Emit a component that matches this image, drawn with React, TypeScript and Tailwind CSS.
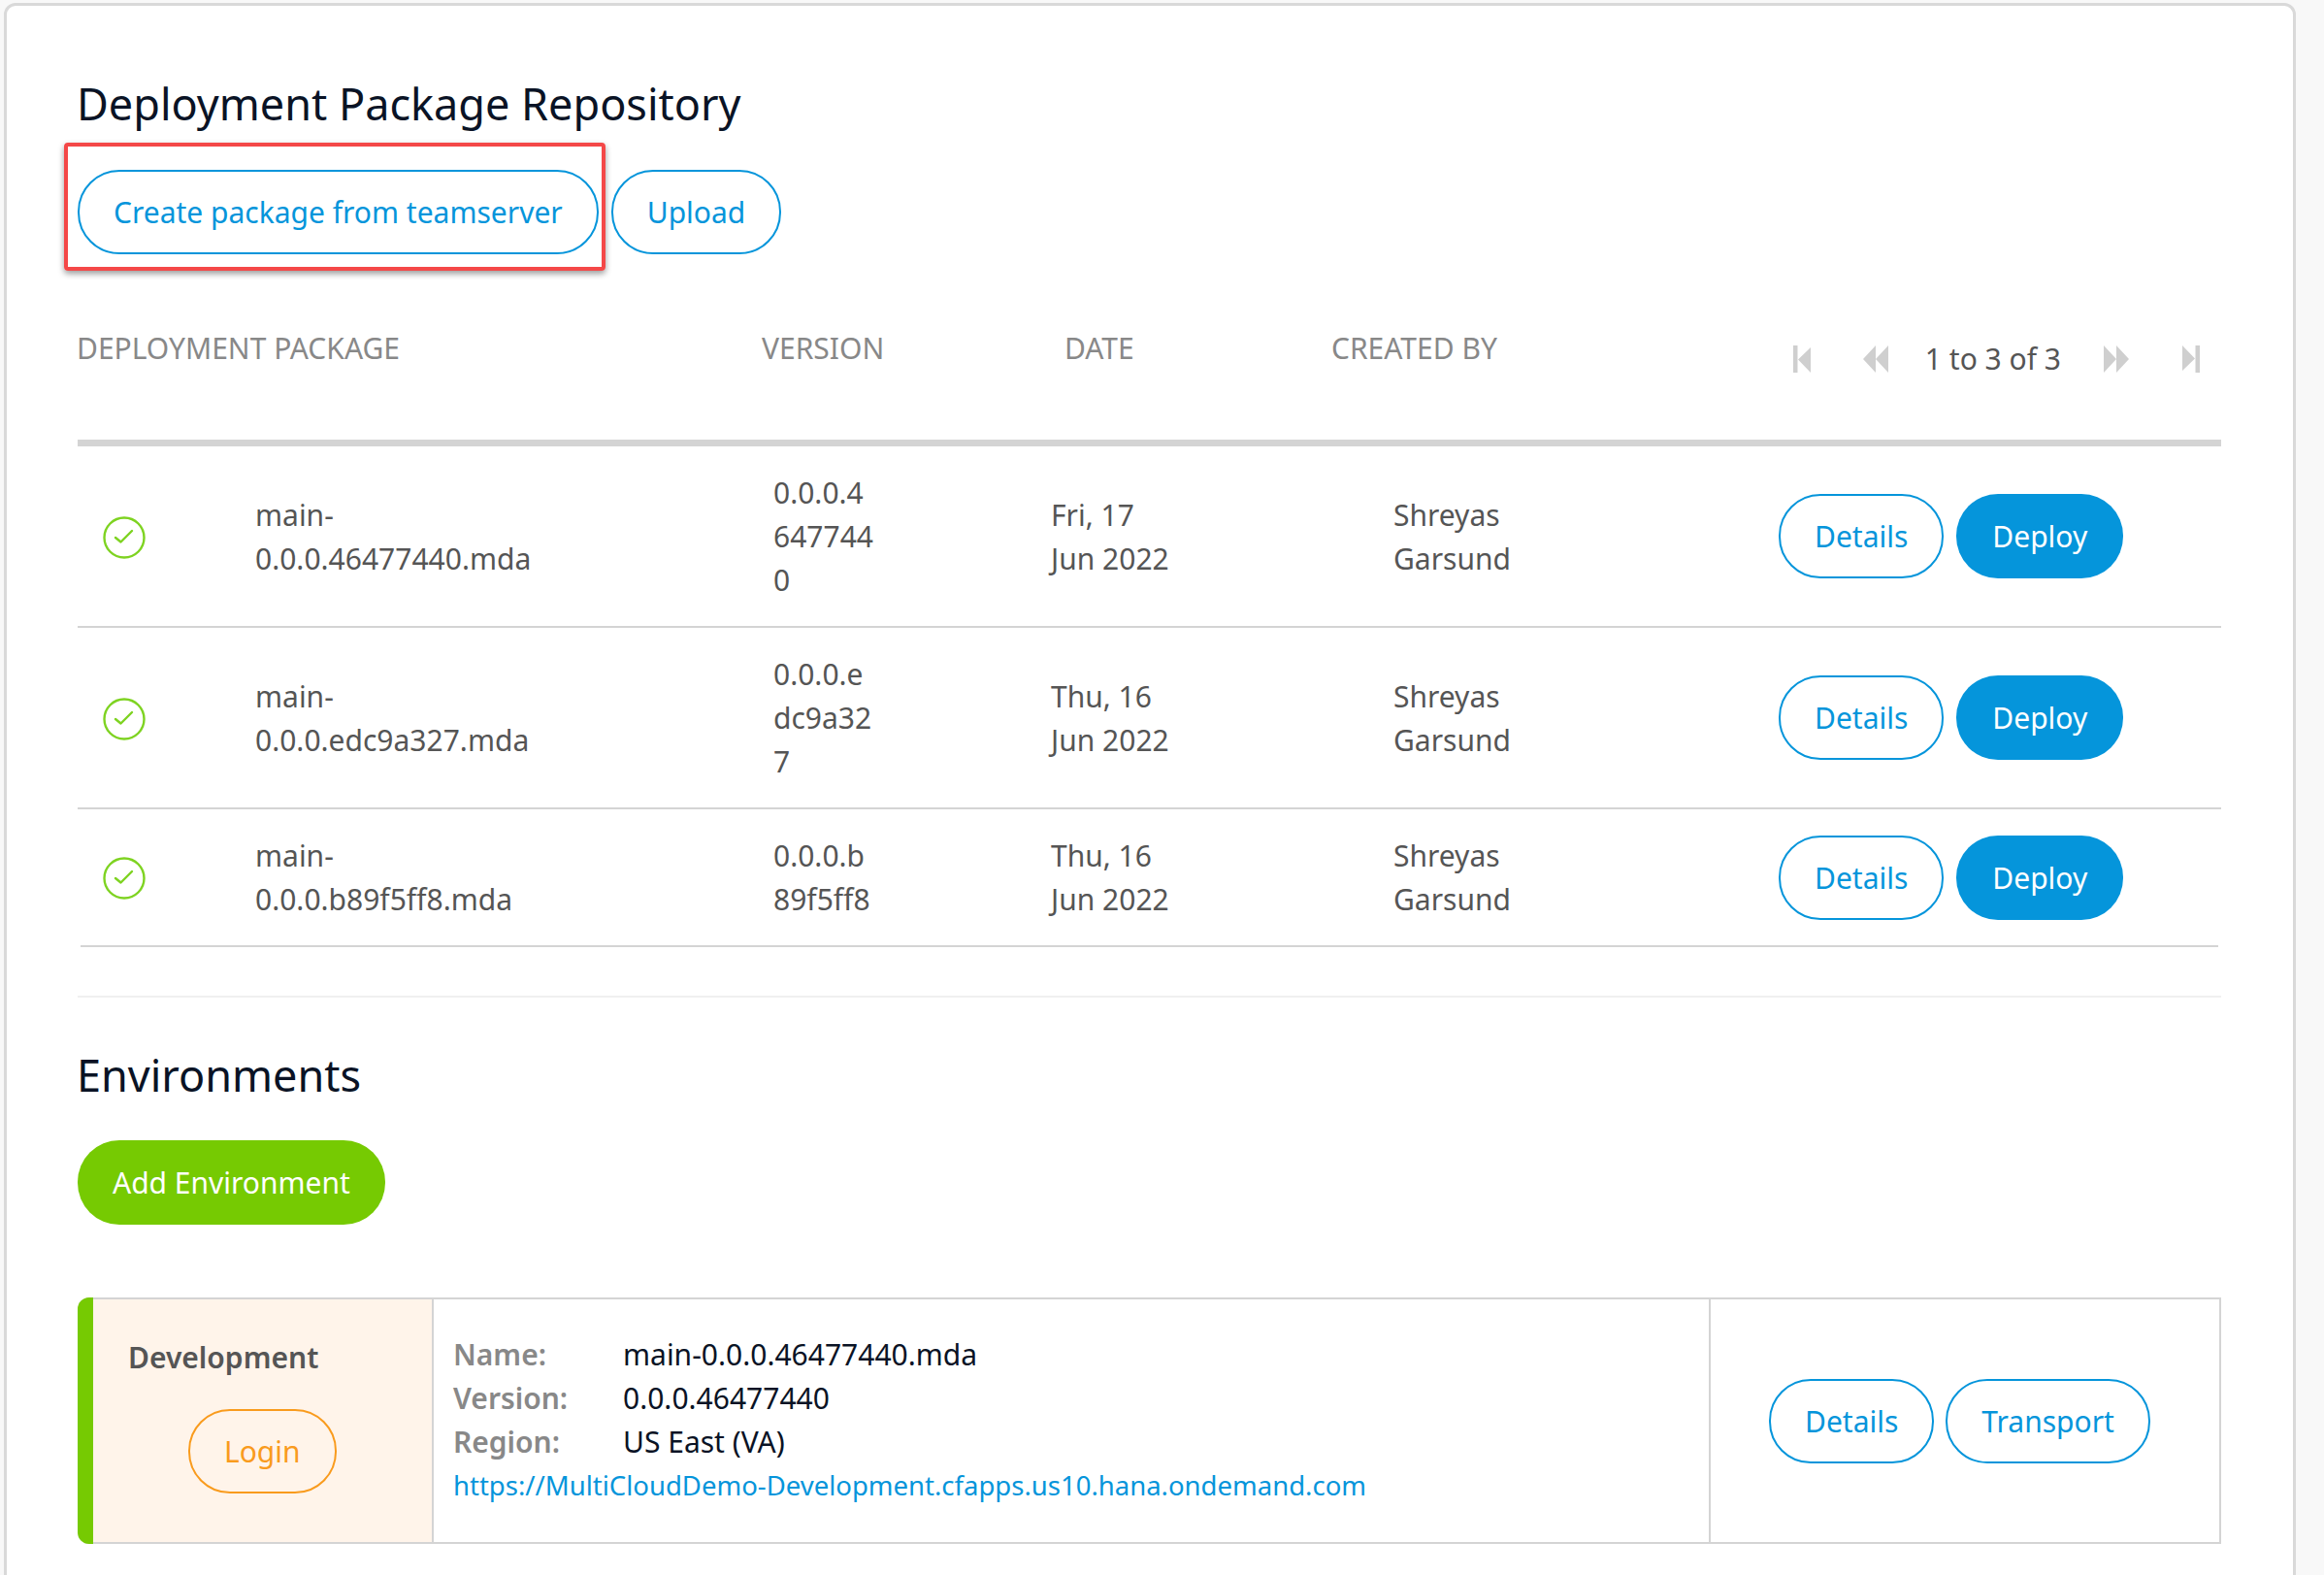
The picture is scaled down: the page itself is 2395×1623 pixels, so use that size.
const font = { fontFamily: '"Noto Sans", sans-serif' };

const rows = [
  { name: 'main-0.0.0.46477440.mda', version: '0.0.0.46477440', date: 'Fri, 17 Jun 2022' },
  { name: 'main-0.0.0.edc9a327.mda', version: '0.0.0.edc9a327', date: 'Thu, 16 Jun 2022' },
  { name: 'main-0.0.0.b89f5ff8.mda', version: '0.0.0.b89f5ff8', date: 'Thu, 16 Jun 2022' },
];

function OutlineButton({ children, className = '' }: { children: React.ReactNode; className?: string }) {
  return (
    <button className={`h-[87px] rounded-[43px] border-2 border-[#0595db] px-[35px] text-[#0595db] ${className}`}>
      {children}
    </button>
  );
}

function CheckIcon() {
  return (
    <svg width="44" height="44" viewBox="0 0 44 44" fill="none" className="shrink-0">
      <circle cx="22" cy="22" r="20.5" stroke="#7ed321" strokeWidth="2.400" />
      <path d="M13 22l5.5 4.500L30 15" stroke="#7ed321" strokeWidth="2.400" strokeLinecap="round" strokeLinejoin="round" />
    </svg>
  );
}

function PagerIcon({ kind }: { kind: 'first' | 'prev' | 'next' | 'last' }) {
  const flip = kind === 'next' || kind === 'last';
  const double = kind === 'prev' || kind === 'next';
  return (
    <svg width={double ? 26 : 18} height="28" viewBox={double ? '0 0 26 28' : '0 0 18 28'} fill="#cfcfcf" className={flip ? 'rotate-180' : ''}>
      {double ? (
        <path d="M13 0v28L0 14zM26 0v28L13 14z" />
      ) : (
        <path d="M0 0h4.500v28H0zM18 2v26L5 14.500z" />
      )}
    </svg>
  );
}

export default function App() {
  return (
    <div className="h-[1623px] overflow-hidden bg-[#f8f8f8] pl-[4px] pt-[3px] text-[30px] leading-[45px] text-[#555]" style={font}>
      <div className="relative h-[1700px] w-[2362px] rounded-t-[12px] border-[3px] border-[#d9d9d9] bg-white pl-[73px] pr-[74px] pt-[78px]">
        <h1 className="-ml-px text-[45px] leading-[45px] text-[#0a1325]">Deployment Package Repository</h1>

        <div className="mt-[46px] flex gap-[13px]">
          <OutlineButton>Create package from teamserver</OutlineButton>
          <OutlineButton>Upload</OutlineButton>
        </div>
        {/* annotation box drawn over the screenshot */}
        <div className="absolute left-[59px] top-[141px] h-[132px] w-[558px] rounded-[4px] border-[4px] border-[#f44848] shadow-[0_3px_6px_rgba(0,0,0,0.4)]" />

        <div className="flex h-[198px] items-start border-b-[7px] border-[#d4d4d4]">
          <div className="-ml-px flex pt-[74px] text-[#888]">
            <div className="w-[706px]">DEPLOYMENT PACKAGE</div>
            <div className="w-[312px]">VERSION</div>
            <div className="w-[275px]">DATE</div>
            <div>CREATED BY</div>
          </div>
          <div className="ml-auto flex items-center pr-[22px] pt-[85px]">
            <PagerIcon kind="first" />
            <div className="ml-[54px]"><PagerIcon kind="prev" /></div>
            <span className="ml-[38px] mr-[44px]">1 to 3 of 3</span>
            <PagerIcon kind="next" />
            <div className="ml-[55px]"><PagerIcon kind="last" /></div>
          </div>
        </div>

        {rows.map((row, i) => (
          <div key={row.name} className={`flex items-center py-[25px] ${i < 2 ? 'border-b-2 border-[#d4d4d4]' : ''}`}>
            <div className="mt-[2px] w-[183px] pl-[26px]"><CheckIcon /></div>
            <div className="w-[534px]"><div className="w-[310px]">{row.name}</div></div>
            <div className="w-[286px]"><div className="w-[105px] break-all">{row.version}</div></div>
            <div className="w-[353px]"><div className="w-[130px]">{row.date}</div></div>
            <div className="w-[397px]"><div className="w-[130px]">Shreyas Garsund</div></div>
            <div className="flex gap-[13px]">
              <OutlineButton>Details</OutlineButton>
              <button className="h-[87px] rounded-[43px] bg-[#0595db] px-[37px] text-white">Deploy</button>
            </div>
          </div>
        ))}
        <div className="mx-[3px] h-[2px] bg-[#d4d4d4]" />

        <div className="mt-[50px] h-[2px] bg-[#f0f0f0]" />

        <h2 className="-ml-px mt-[57px] text-[45px] leading-[45px] text-[#0a1325]">Environments</h2>
        <button className="mt-[45px] h-[87px] rounded-[43px] bg-[#76ca02] px-[36px] text-white">Add Environment</button>

        <div className="mt-[75px] flex h-[254px] rounded-l-[12px] border-y-2 border-r-2 border-[#d4d4d4]">
          <div className="-my-[2px] w-[16px] shrink-0 rounded-l-[12px] bg-[#76ca02]" />
          <div className="w-[349px] shrink-0 bg-[#fff4ea] pl-[36px] pt-[37px]">
            <div className="font-semibold">Development</div>
            <button className="ml-[62px] mt-[31px] h-[87px] rounded-[43px] border-2 border-[#f99b1d] px-[35px] text-[#f99b1d]">Login</button>
          </div>
          <div className="flex-1 border-x-2 border-[#d4d4d4] pl-[20px] pt-[34px]">
            <div className="flex"><span className="w-[175px] font-semibold text-[#888]">Name:</span><span className="text-[#0a1325]">main-0.0.0.46477440.mda</span></div>
            <div className="flex"><span className="w-[175px] font-semibold text-[#888]">Version:</span><span className="text-[#0a1325]">0.0.0.46477440</span></div>
            <div className="flex"><span className="w-[175px] font-semibold text-[#888]">Region:</span><span className="text-[#0a1325]">US East (VA)</span></div>
            <div className="text-[27.500px] text-[#0595db]">https://MultiCloudDemo-Development.cfapps.us10.hana.ondemand.com</div>
          </div>
          <div className="flex w-[524px] shrink-0 items-center gap-[12px] pl-[60px]">
            <OutlineButton>Details</OutlineButton>
            <OutlineButton>Transport</OutlineButton>
          </div>
        </div>
      </div>
    </div>
  );
}
